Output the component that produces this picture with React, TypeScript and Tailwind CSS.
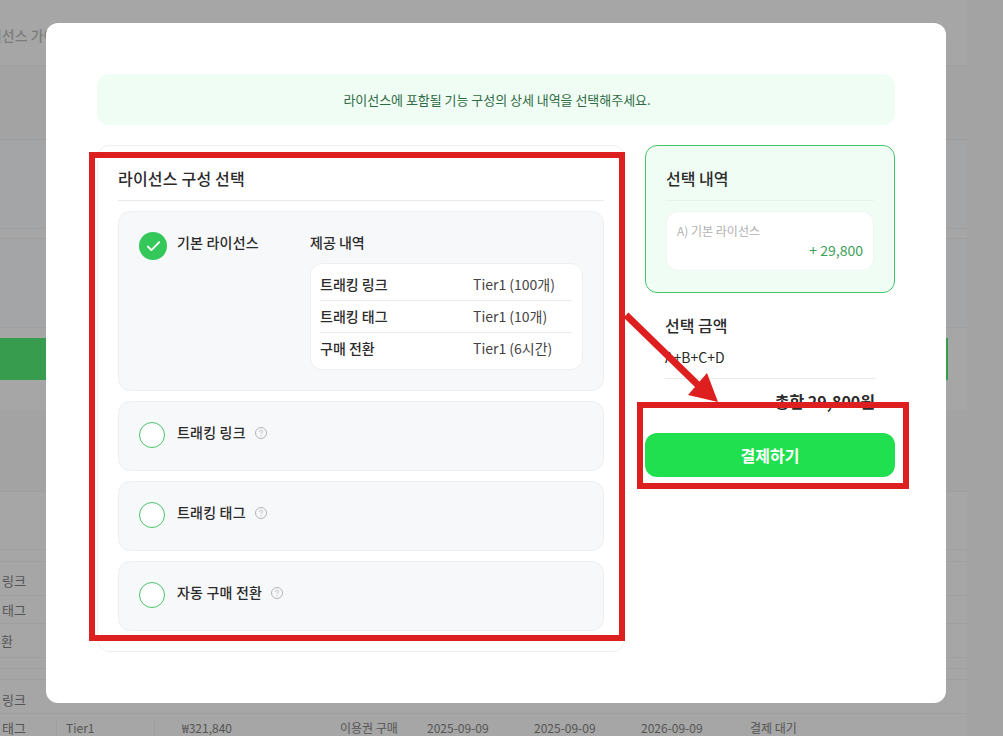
import React from 'react';
import { Check } from 'lucide-react';

const font = '[font-family:"Noto_Sans_CJK_KR","Noto_Sans",sans-serif]';

const provided = [
  { name: '트래킹 링크', value: 'Tier1 (100개)' },
  { name: '트래킹 태그', value: 'Tier1 (10개)' },
  { name: '구매 전환', value: 'Tier1 (6시간)' },
];

const options = ['트래킹 링크', '트래킹 태그', '자동 구매 전환'];

const HelpIcon = () => (
  <svg width="12" height="12" viewBox="0 0 12 12" fill="none" className="ml-[9px] mt-px shrink-0">
    <circle cx="6" cy="6" r="5.5" stroke="#b5b5b5" />
    <path d="M4.5 4.8a1.5 1.5 0 1 1 2.2 1.3c-.5.3-.7.5-.7 1" stroke="#b5b5b5" strokeWidth="0.9" />
    <circle cx="6" cy="8.8" r="0.55" fill="#b5b5b5" />
  </svg>
);

const Background = () => (
  <div className="flex w-[967px] flex-col text-xs text-[#555]">
    <div className="flex h-[66px] items-center border-b border-[#9e9e9e] pt-[5px] text-[#7c7c7c]">
      <span className="ml-[-24px] whitespace-nowrap text-sm font-medium">라이선스 가이드</span>
    </div>
    <div className="h-[74px] border-b border-[#9d9d9d] bg-[#a3a3a3]" />
    <div className="h-[89px] border-b border-[#9f9f9f] bg-[#a4a5a6]" />
    <div className="h-[10px] border-b border-[#9f9f9f]" />
    <div className="h-[89px] border-b border-[#9f9f9f] bg-[#a4a5a6]" />
    <div className="h-[10px]" />
    <div className="h-[42px] w-[948px] bg-[#389c4f]" />
    <div className="h-[30px]" />
    <div className="h-[82px] border-b border-[#9f9f9f] bg-[#a3a3a3]" />
    <div className="h-[58px] border-b border-[#9f9f9f]" />
    <div className="h-[12px] border-b border-[#9f9f9f]" />
    <div className="flex h-[34px] items-center border-b border-[#9f9f9f] pl-[2px] pt-1 text-[13px]">링크</div>
    <div className="flex h-[28px] items-center border-b border-[#9f9f9f] pl-[2px] text-[13px]">태그</div>
    <div className="flex h-[34px] items-center border-b border-[#9f9f9f] text-[13px]">
      <span className="ml-[-11px] whitespace-nowrap">전환</span>
    </div>
    <div className="h-[11px] border-b border-[#9f9f9f]" />
    <div className="h-[11px] border-b border-[#9f9f9f]" />
    <div className="flex h-[34px] items-center border-b border-[#9f9f9f] pl-[2px] pt-[6px] text-[13px]">링크</div>
    <div className="flex h-[28px] items-center whitespace-nowrap">
      <span className="w-[57px] border-r border-[#9f9f9f] pl-[2px] text-[13px]">태그</span>
      <span className="w-[98px] border-r border-[#9f9f9f] pl-[9px]">Tier1</span>
      <span className="ml-[27px] w-[158px]">₩321,840</span>
      <span className="w-[87px]">이용권 구매</span>
      <span className="w-[107px]">2025-09-09</span>
      <span className="w-[107px]">2025-09-09</span>
      <span className="w-[109px]">2026-09-09</span>
      <span>결제 대기</span>
    </div>
  </div>
);

const Modal = () => (
  <div className="absolute left-[46px] top-[23px] h-[680px] w-[900px] rounded-xl bg-white p-[51px_51px_0_51px] text-[#2b2b2b]">
    <div className="flex h-[51px] items-center justify-center rounded-xl bg-[#f0fdf4] pl-[2px] text-[13px] tracking-[-0.03px] text-[#2f6b45]">
      라이선스에 포함될 기능 구성의 상세 내역을 선택해주세요.
    </div>
    <div className="mt-5 flex gap-5">
      <div className="h-[507px] w-[528px] rounded-xl border border-[#efefef] px-5">
        <h2 className="flex h-[54px] items-center pt-[9px] text-base font-medium tracking-[0.2px]">라이선스 구성 선택</h2>
        <div className="border-t border-[#eaeaea] pt-[10px]">
          <div className="flex h-[180px] rounded-xl border border-[#eeeff1] bg-[#f7f8fa] pl-5 pr-5 pt-5">
            <div className="flex h-7 w-7 shrink-0 items-center justify-center rounded-full bg-[#34c759]">
              <Check size={17} strokeWidth={2.5} color="#ffffff" />
            </div>
            <div className="ml-[10px] w-[133px] shrink-0 text-sm font-medium tracking-[0.2px]">기본 라이선스</div>
            <div className="flex-1">
              <div className="text-sm font-medium">제공 내역</div>
              <div className="mt-[11px] rounded-xl border border-[#f0f0f0] bg-white pb-1 pl-[9px] pr-[10px] pt-[5px]">
                {provided.map((row, i) => (
                  <div
                    key={row.name}
                    className={`flex h-[32px] items-center pb-[2px] text-sm ${i < provided.length - 1 ? 'border-b border-[#eaeaea]' : ''}`}
                  >
                    <span className="w-[153px] font-medium">{row.name}</span>
                    <span className="text-[#444]">{row.value}</span>
                  </div>
                ))}
              </div>
            </div>
          </div>
          <div className="mt-[10px] flex flex-col gap-[10px]">
            {options.map((name) => (
              <div key={name} className="flex h-[70px] rounded-xl border border-[#eeeff1] bg-[#f7f8fa] pl-5 pt-5">
                <div className="h-[26px] w-[26px] shrink-0 rounded-full border border-[#45c46a] bg-white" />
                <div className="ml-3 flex h-5 items-center text-sm font-medium tracking-[0.2px]">
                  {name}
                  <HelpIcon />
                </div>
              </div>
            ))}
          </div>
        </div>
      </div>
      <div className="w-[250px]">
        <div className="h-[148px] rounded-xl border border-[#45c46a] bg-[#f0fdf4] px-5">
          <h3 className="flex h-[54px] items-center pt-[9px] text-base font-medium">선택 내역</h3>
          <div className="border-t border-[#e6f2ea] pt-[10px]">
            <div className="h-[60px] rounded-xl border border-[#f1f5f2] bg-white px-[10px] pt-[11px]">
              <div className="text-xs text-[#b0b0b0]">A) 기본 라이선스</div>
              <div className="mt-px text-right text-sm leading-[20px] text-[#3c9f57]">+ 29,800</div>
            </div>
          </div>
        </div>
        <div className="px-5">
          <h3 className="mt-[19px] text-base font-medium leading-[26px]">선택 금액</h3>
          <div className="mt-[9px] h-[32px] border-b border-[#eaeaea] text-sm leading-5">A+B+C+D</div>
          <div className="h-[54px] pt-[10px] text-right text-base font-bold leading-[24px]">총합 29,800원</div>
        </div>
        <button className="h-[44px] w-full rounded-xl bg-[#20e04f] text-base font-bold text-white">결제하기</button>
      </div>
    </div>
  </div>
);

const Annotations = () => (
  <>
    <div className="absolute left-[89px] top-[152px] h-[489px] w-[536px] border-[6px] border-[#dd1f1f]" />
    <div className="absolute left-[637px] top-[402px] h-[87px] w-[272px] border-[6px] border-[#dd1f1f]" />
    <svg className="absolute left-[620px] top-[310px]" width="110" height="100" viewBox="0 0 110 100" fill="none">
      <path d="M6 5 L78 75" stroke="#dd1f1f" strokeWidth="7" />
      <path d="M87 63 L98 92 L68 85 Z" fill="#dd1f1f" />
    </svg>
  </>
);

export default function App() {
  return (
    <div className={`relative h-[736px] w-[1003px] overflow-hidden bg-[#a2a3a2] ${font}`}>
      <div className="h-full w-[967px] bg-[#a6a6a6]">
        <Background />
      </div>
      <Modal />
      <Annotations />
    </div>
  );
}
